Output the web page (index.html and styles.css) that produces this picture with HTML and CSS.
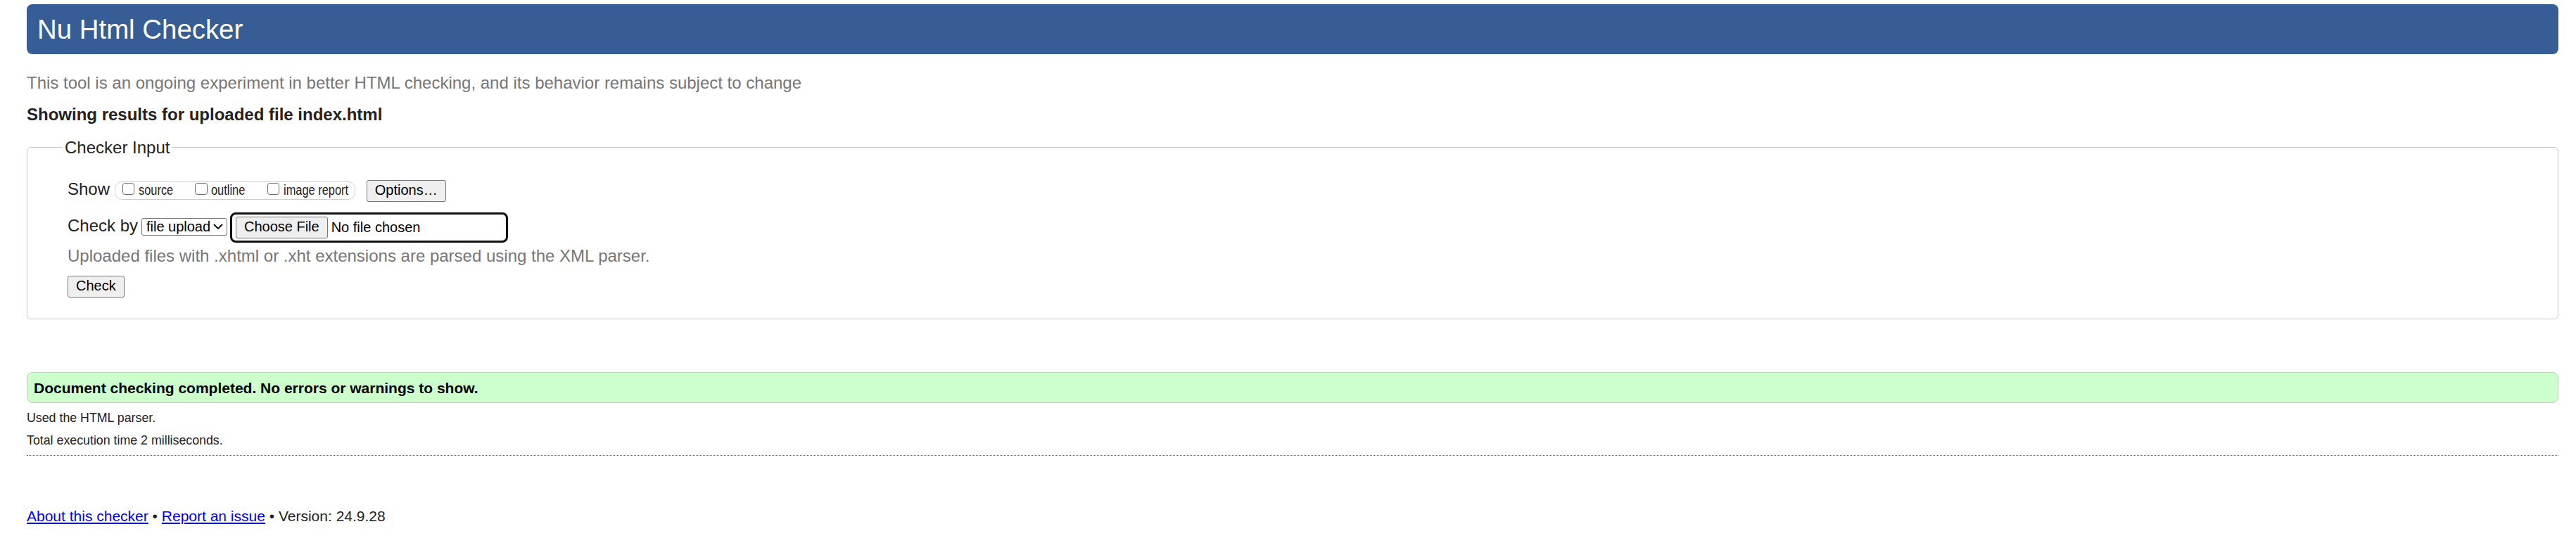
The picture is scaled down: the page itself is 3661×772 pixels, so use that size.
FILE: index.html
```html
<!DOCTYPE html>
<html lang="en">
<head>
<meta charset="utf-8">
<title>Nu Html Checker</title>
<link rel="stylesheet" href="styles.css">
</head>
<body>
<h1 class="title">Nu Html Checker</h1>
<p class="intro">This tool is an ongoing experiment in better HTML checking, and its behavior remains subject to change</p>
<p class="showing">Showing results for uploaded file index.html</p>
<form class="checker">
  <fieldset class="input-box">
    <legend class="input-legend">Checker Input</legend>
    <div class="row row-show">
      <span class="row-label label-show">Show</span>
      <span class="opts">
        <label class="opt"><input type="checkbox" class="cb"><span class="opt-text opt-source">source</span></label>
        <label class="opt"><input type="checkbox" class="cb"><span class="opt-text opt-outline">outline</span></label>
        <label class="opt"><input type="checkbox" class="cb"><span class="opt-text opt-image">image report</span></label>
      </span>
      <button type="button" class="btn btn-options">Options…</button>
    </div>
    <div class="row row-check">
      <span class="row-label label-check">Check by</span>
      <span class="select"><span>file upload</span><svg class="chev" width="14" height="8" viewBox="0 0 14 8"><polyline points="1,1 7,7 13,1" fill="none" stroke="#111" stroke-width="2"/></svg></span>
      <span class="file"><button type="button" class="btn">Choose File</button><span class="file-name">No file chosen</span></span>
    </div>
    <p class="note">Uploaded files with .xhtml or .xht extensions are parsed using the XML parser.</p>
    <div class="row row-submit"><button type="button" class="btn">Check</button></div>
  </fieldset>
</form>
<p class="success">Document checking completed. No errors or warnings to show.</p>
<p class="meta meta-first">Used the HTML parser.</p>
<p class="meta meta-second">Total execution time 2 milliseconds.</p>
<hr class="sep">
<p class="footer"><a href="#">About this checker</a> • <a href="#">Report an issue</a> • Version: 24.9.28</p>
</body>
</html>
```
FILE: styles.css
```css
html, body {
  background: #fff;
}
body {
  margin: 0;
  padding: 6px 25px 0 38px;
  font-family: "Liberation Sans", Arial, sans-serif;
  color: #222;
  overflow: hidden;
}
.title {
  margin: 0;
  height: 71px;
  box-sizing: border-box;
  padding: 0 15px;
  background: #365d95;
  color: #fff;
  font-size: 38.4px;
  font-weight: normal;
  line-height: 71px;
  border-radius: 8px;
}
.intro {
  margin: 26.7px 0 0;
  font-size: 24px;
  line-height: 28px;
  color: #767676;
}
.showing {
  margin: 17px 0 0;
  font-size: 24px;
  line-height: 28px;
  font-weight: bold;
  color: #222;
}
.checker {
  margin: 19.3px 0 0;
}
.input-box {
  margin: 0;
  padding: 31px 20px 29.8px 57px;
  border: 1px solid #c8c8c8;
  border-radius: 6px;
  min-width: 0;
}
.input-legend {
  padding: 0 3px;
  margin-left: -7px;
  font-size: 24px;
  line-height: 28px;
  color: #222;
}
.row {
  display: flex;
  align-items: baseline;
}
.row-label {
  font-size: 24px;
  line-height: 28px;
}
.label-show {
  margin-right: 7px;
}
.label-check {
  margin-right: 5.4px;
}
.row-check {
  margin-top: 15px;
}
.row-submit {
  margin-top: 13.3px;
}
.opts {
  display: inline-flex;
  align-items: baseline;
  gap: 31.5px;
  height: 26px;
  box-sizing: border-box;
  padding: 0 8.8px 0 9.6px;
  border: 1px solid #cfcfcf;
  border-radius: 10px;
}
.opt {
  display: inline-flex;
  align-items: baseline;
  gap: 5.5px;
  color: #222;
}
.opt-text {
  display: inline-block;
  font-size: 20px;
  line-height: 22px;
  transform: scaleX(0.82);
  transform-origin: 0 0;
}
.opt-source {
  margin-right: -10.8px;
}
.opt-outline {
  margin-right: -10.6px;
}
.opt-image {
  margin-right: -20.2px;
}
.cb {
  appearance: none;
  -webkit-appearance: none;
  width: 17.4px;
  height: 17.4px;
  margin: 0;
  box-sizing: border-box;
  border: 1px solid #6a6a6a;
  border-radius: 3.5px;
  background: #fff;
}
.btn {
  font-family: "Liberation Sans", Arial, sans-serif;
  font-size: 20px;
  line-height: 23px;
  padding: 2px 11px 4px;
  border: 1px solid #767676;
  border-radius: 3px;
  background: #efefef;
  color: #000;
  margin: 0;
}
.btn-options {
  margin-left: 16px;
}
.select {
  display: inline-flex;
  align-items: center;
  justify-content: space-between;
  width: 122px;
  height: 25px;
  box-sizing: border-box;
  padding: 0 5px 0 5.5px;
  border: 1px solid #767676;
  border-radius: 3px;
  font-size: 20px;
  line-height: 23px;
  color: #000;
  background: #fff;
}
.chev {
  display: block;
}
.file {
  display: inline-flex;
  align-items: center;
  width: 395px;
  box-sizing: border-box;
  margin-left: 3.5px;
  padding: 3px 5px;
  border: 3px solid #101010;
  border-radius: 8px;
}
.file-name {
  margin-left: 5px;
  font-size: 20px;
  line-height: 23px;
  color: #000;
}
.note {
  margin: 5.5px 0 0;
  font-size: 24px;
  line-height: 28px;
  color: #767676;
}
.success {
  margin: 75.8px 0 0;
  padding: 9.7px 9px 7.7px;
  border: 1px solid #c8c8c8;
  border-radius: 8px;
  background: #ccffcc;
  font-size: 21px;
  line-height: 24px;
  font-weight: bold;
  color: #000;
}
.meta {
  font-size: 17.8px;
  line-height: 20px;
  color: #222;
}
.meta-first {
  margin: 11.1px 0 0;
}
.meta-second {
  margin: 11.7px 0 0;
}
.sep {
  margin: 11px 0 0;
  height: 0;
  border: 0;
  border-top: 1px dotted #666;
}
.footer {
  margin: 74.9px 0 0;
  font-size: 21px;
  line-height: 24px;
  color: #222;
}
.footer a {
  color: #0000ee;
  text-decoration: underline;
}
```
